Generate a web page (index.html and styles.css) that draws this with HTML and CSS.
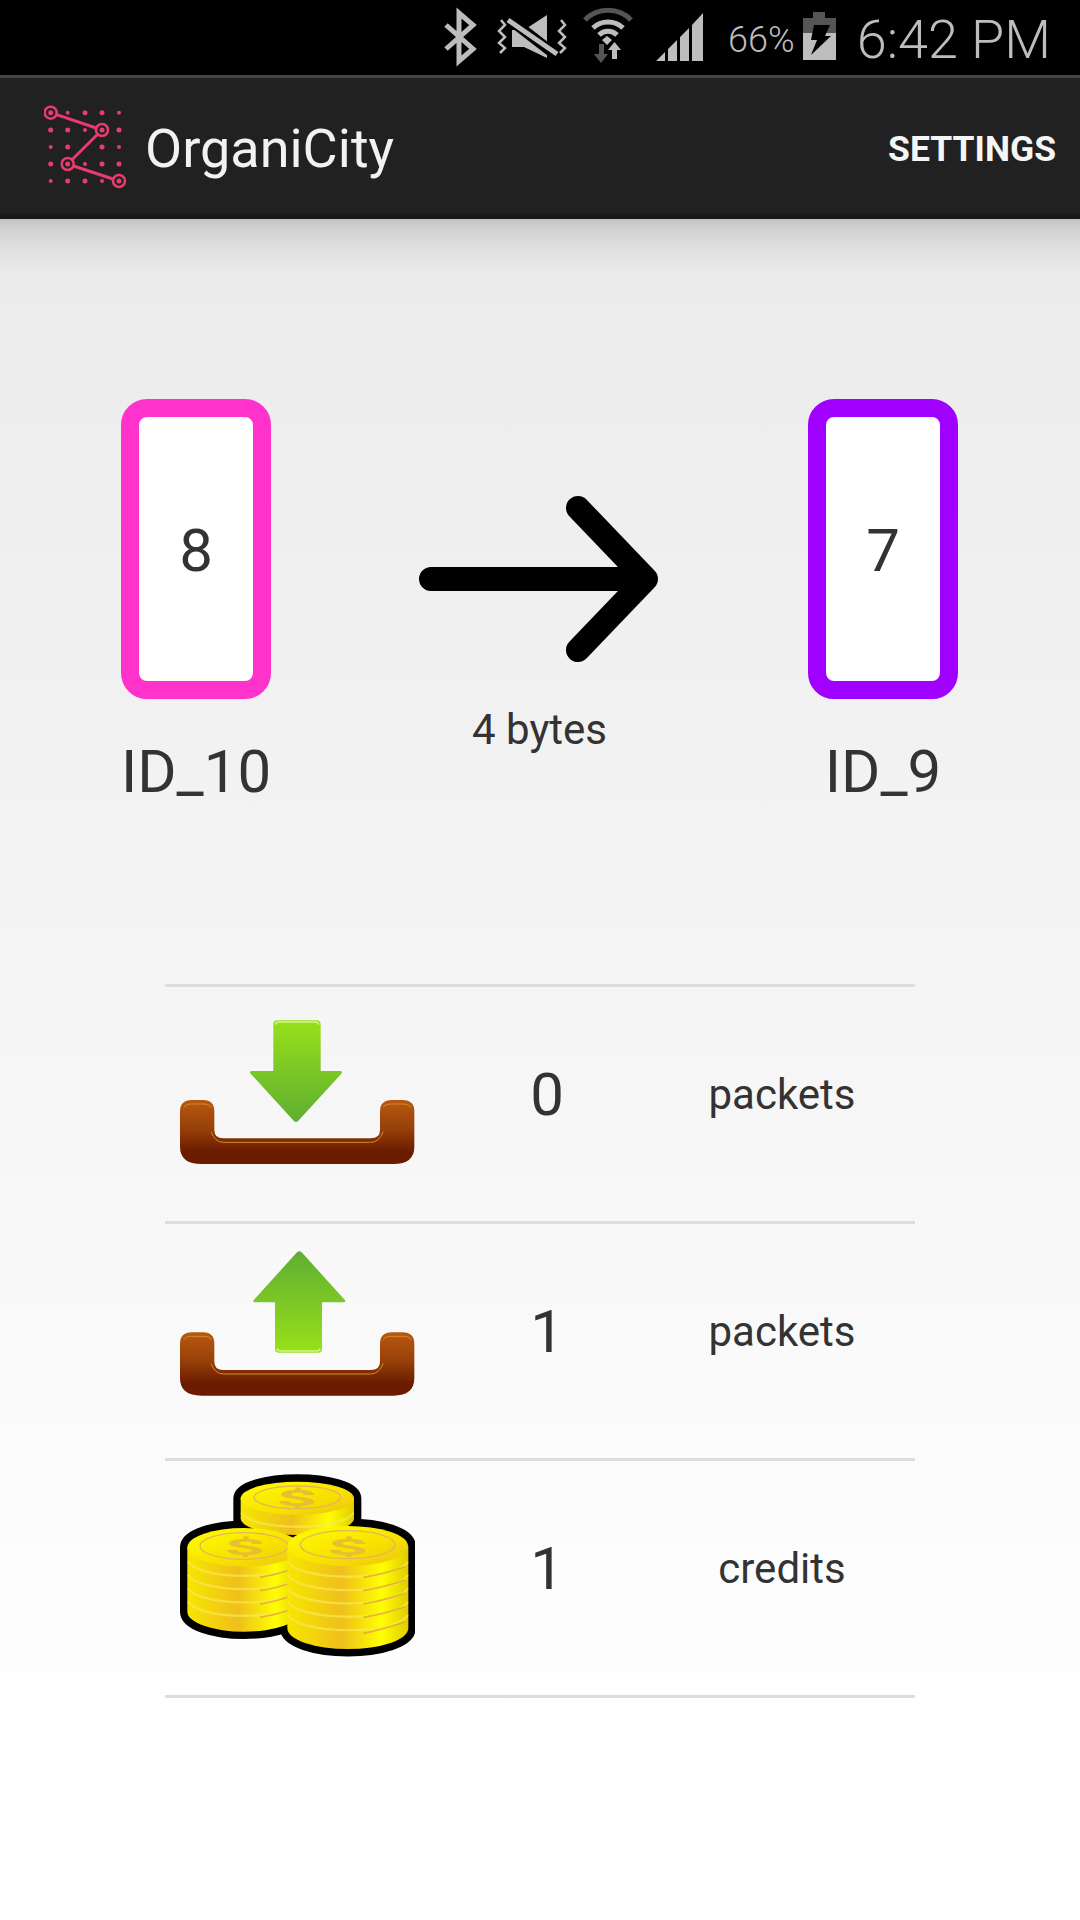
FILE: index.html
```html
<!DOCTYPE html>
<html lang="en">
<head>
  <meta charset="UTF-8" />
  <meta name="viewport" content="width=device-width, initial-scale=1" />
  <title>OrganiCity</title>
  <link rel="stylesheet" href="styles.css">
</head>
<body>
  <svg class="defs" width="0" height="0">
    <defs>
      <linearGradient id="trayFill" x1="0" y1="0" x2="0" y2="1">
        <stop offset="0" stop-color="#b9590f" />
        <stop offset="0.45" stop-color="#97400a" />
        <stop offset="0.8" stop-color="#6c1c00" />
        <stop offset="1" stop-color="#6a1b00" />
      </linearGradient>
      <linearGradient id="arrowDown" x1="0" y1="0" x2="0" y2="1">
        <stop offset="0" stop-color="#98e01a" />
        <stop offset="1" stop-color="#5fae32" />
      </linearGradient>
      <linearGradient id="arrowUp" x1="0" y1="1" x2="0" y2="0">
        <stop offset="0" stop-color="#98e01a" />
        <stop offset="1" stop-color="#5fae32" />
      </linearGradient>
      <linearGradient id="coinSide" x1="0" y1="0" x2="1" y2="0">
        <stop offset="0" stop-color="#f7e600" />
        <stop offset="0.45" stop-color="#efbf1c" />
        <stop offset="0.78" stop-color="#ffff00" />
        <stop offset="1" stop-color="#e2cb00" />
      </linearGradient>
      <linearGradient id="coinTop" x1="0" y1="0" x2="1" y2="1">
        <stop offset="0" stop-color="#ffff00" />
        <stop offset="0.6" stop-color="#f8e000" />
        <stop offset="1" stop-color="#ecc414" />
      </linearGradient>
    </defs>
  </svg>

  <div class="status-bar">
    <!-- bluetooth -->
    <svg class="status-icon bluetooth" viewBox="0 0 34 75"><path d="M3 25 L30 49 L16 61 V13 L30 25 L3 49" /></svg>
    <!-- mute + vibrate -->
    <svg class="status-icon vibrate" viewBox="0 0 70 75">
      <path class="solid" d="M15 30 H27 L50 15 V58 L27 47 H15 Z" />
      <path class="gap" d="M11 18 L60 56" />
      <path class="line" d="M11 20 L60 54" />
      <path class="thin" d="M4 20 L8 25 L2 31 L8 37 L2 43 L8 48 L3 53" />
      <path class="thin" d="M64 20 L68 25 L62 31 L68 37 L62 43 L68 48 L63 53" />
    </svg>
    <!-- wifi -->
    <svg class="status-icon wifi" viewBox="0 0 50 75">
      <path class="arc dim" d="M2 20 C14 7 36 7 48 20" />
      <path class="arc" d="M10 28 C18 20 32 20 40 28" />
      <path class="arc" d="M16 35 C21 30 29 30 34 35" />
      <path class="solid" d="M19 40 L24 36 L29 40 L24 45 Z" />
      <path class="solid dim" d="M16 44 H21 V54 H25 L18 63 L11 54 H16 Z" />
      <path class="solid" d="M29 59 H34 V50 H38 L31.500 42 L25 50 H29 Z" />
    </svg>
    <!-- signal -->
    <svg class="status-icon signal" viewBox="0 0 50 75">
      <path class="solid" d="M1 61 L10 52 V61 Z M13 49 L22 40 V61 H13 Z M25 37 L34 28 V61 H25 Z M37 25 L48 13 V61 H37 Z" />
    </svg>
    <span class="status-pct">66%</span>
    <!-- battery charging -->
    <svg class="status-icon battery" viewBox="0 0 36 75">
      <path class="solid dim" d="M11 12 H23 V18 H34 V33 H1 V18 H11 Z" />
      <path class="solid" d="M1 33 H34 V60 H1 Z" />
      <path class="bolt" d="M12 25 H28 L23 36 H29 L9 55 L15 40 H9 Z" />
    </svg>
    <span class="status-time">6:42 PM</span>
  </div>

  <header class="app-bar">
    <svg class="logo" viewBox="0 0 90 90" width="90" height="90">
      <g class="logo-dots">
        <circle cx="23.700" cy="13.700" r="2" /><circle cx="41" cy="13.700" r="2.500" /><circle cx="58" cy="13.700" r="2.500" /><circle cx="75" cy="13.700" r="2" />
        <circle cx="6.700" cy="31" r="2.500" /><circle cx="23.700" cy="31" r="2.500" /><circle cx="41" cy="31" r="2" /><circle cx="75" cy="31" r="2.500" />
        <circle cx="6.700" cy="48" r="2" /><circle cx="23.700" cy="48" r="2.500" /><circle cx="58" cy="48" r="2.500" /><circle cx="75" cy="48" r="2" />
        <circle cx="6.700" cy="65" r="2.500" /><circle cx="41" cy="65" r="2" /><circle cx="58" cy="65" r="2.500" /><circle cx="75" cy="65" r="2.500" />
        <circle cx="6.700" cy="82" r="2" /><circle cx="23.700" cy="82" r="2.500" /><circle cx="41" cy="82" r="2.500" /><circle cx="58" cy="82" r="2" />
      </g>
      <path class="logo-line" d="M6.700 13.700 L58 31 L23.700 65 L75 82" />
      <g class="logo-nodes">
        <circle cx="6.700" cy="13.700" r="6" /><circle cx="58" cy="31" r="6" /><circle cx="23.700" cy="65" r="6" /><circle cx="75" cy="82" r="6" />
      </g>
      <g class="logo-dots">
        <circle cx="6.700" cy="13.700" r="2.500" /><circle cx="58" cy="31" r="2.500" /><circle cx="23.700" cy="65" r="2.500" /><circle cx="75" cy="82" r="2.500" />
      </g>
    </svg>
    <h1 class="app-title">OrganiCity</h1>
    <span class="app-action">SETTINGS</span>
  </header>

  <main class="content">
    <section class="transfer">
      <div class="node">
        <div class="node-box pink">8</div>
        <div class="node-name">ID_10</div>
      </div>
      <div class="link">
        <svg class="link-arrow" viewBox="0 0 242 190" width="242" height="190">
          <path d="M12 95 H226 M159 24 L227 95 L159 166" />
        </svg>
        <div class="link-label">4 bytes</div>
      </div>
      <div class="node">
        <div class="node-box purple">7</div>
        <div class="node-name">ID_9</div>
      </div>
    </section>

    <section class="stats">
      <div class="stat-row">
        <svg class="stat-icon" viewBox="15 -9 750 702">
          <path fill="url(#trayFill)" d="M95 330 H130 Q163 330 163 365 V420 Q163 445 190 445 H632 Q660 445 660 420 V365 Q660 330 695 330 H728 Q763 330 763 365 V470 Q763 522 700 522 H125 Q60 522 60 470 V365 Q60 330 95 330 Z" />
          <path class="tray-shine" d="M72 352 Q76 342 95 342 H130 Q150 342 153 352 M153 425 Q165 457 190 457 H632 Q657 457 670 425 M670 352 Q675 342 695 342 H728 Q748 342 752 352" />
          <path fill="url(#arrowDown)" d="M352 91 H470 Q482 91 482 103 V243 H540 Q550 243 544 251 L415 392 Q408 399 401 392 L272 251 Q266 243 276 243 H340 V103 Q340 91 352 91 Z" />
          <path class="arrow-shine" d="M346 104 Q348 96 356 96 H466 Q474 96 476 104" />
        </svg>
        <span class="stat-value">0</span>
        <span class="stat-unit">packets</span>
      </div>
      <div class="stat-row">
        <svg class="stat-icon" viewBox="15 -3 750 702">
          <path fill="url(#trayFill)" d="M95 322 H130 Q163 322 163 357 V410 Q163 435 190 435 H632 Q660 435 660 410 V357 Q660 322 695 322 H728 Q763 322 763 357 V460 Q763 512 700 512 H125 Q60 512 60 460 V357 Q60 322 95 322 Z" />
          <path class="tray-shine" d="M72 344 Q76 334 95 334 H130 Q150 334 153 344 M153 415 Q165 447 190 447 H632 Q657 447 670 415 M670 344 Q675 334 695 334 H728 Q748 334 752 344" />
          <path fill="url(#arrowUp)" d="M411 82 Q418 75 425 82 L554 224 Q560 232 550 232 H486 V371 Q486 383 474 383 H357 Q345 383 345 371 V232 H286 Q276 232 282 224 Z" />
          <path class="arrow-shine" d="M351 370 Q353 378 361 378 H470 Q478 378 480 370" />
        </svg>
        <span class="stat-value">1</span>
        <span class="stat-unit">packets</span>
      </div>
      <div class="stat-row">
        <svg class="stat-icon" viewBox="15 3 750 702">
          <!-- black outline behind the three stacks -->
          <g class="coin-outline">
            <path d="M242 115 A170 50 0 0 1 582 115 V240 H242 Z" />
            <path d="M82 262 A170 58 0 0 1 422 262 V455 A170 60 0 0 1 82 455 Z" />
            <path d="M382 258 A181 60 0 0 1 745 258 V505 A181 62 0 0 1 382 505 Z" />
          </g>
          <!-- back stack -->
          <path fill="url(#coinSide)" d="M242 115 H582 V175 A170 50 0 0 1 242 175 Z" />
          <path class="coin-band" d="M244 158 A170 50 0 0 0 580 158" />
          <ellipse fill="url(#coinTop)" cx="412" cy="115" rx="170" ry="50" />
          <ellipse class="coin-ring" cx="412" cy="112" rx="130" ry="34" />
          <text class="coin-sign" transform="translate(410 138) scale(3 .9)" text-anchor="middle">$</text>
          <!-- left stack -->
          <path fill="url(#coinSide)" d="M82 262 H422 V455 A170 60 0 0 1 82 455 Z" />
          <path class="coin-band" d="M84 305 A170 50 0 0 0 420 305 M84 345 A170 50 0 0 0 420 345 M84 385 A170 50 0 0 0 420 385 M84 425 A170 50 0 0 0 420 425" />
          <path class="coin-shade" d="M300 352 Q350 345 400 325 M300 392 Q350 385 400 365 M300 432 Q350 425 400 405 M300 472 Q350 465 400 445" />
          <ellipse fill="url(#coinTop)" cx="252" cy="262" rx="170" ry="58" />
          <ellipse class="coin-ring" cx="252" cy="258" rx="132" ry="40" />
          <text class="coin-sign" transform="translate(254 286) scale(3 .9)" text-anchor="middle">$</text>
          <!-- front stack -->
          <path fill="url(#coinSide)" d="M382 258 H745 V505 A181 62 0 0 1 382 505 Z" />
          <path class="coin-band" d="M384 305 A181 52 0 0 0 743 305 M384 345 A181 52 0 0 0 743 345 M384 385 A181 52 0 0 0 743 385 M384 425 A181 52 0 0 0 743 425 M384 465 A181 52 0 0 0 743 465" />
          <path class="coin-shade" d="M610 352 Q680 340 735 320 M610 392 Q680 380 735 360 M610 432 Q680 420 735 400 M610 472 Q680 460 735 440 M610 520 Q680 505 735 485" />
          <ellipse fill="url(#coinTop)" cx="563" cy="258" rx="181" ry="60" />
          <ellipse class="coin-ring" cx="563" cy="254" rx="142" ry="42" />
          <text class="coin-sign" transform="translate(563 284) scale(3 .9)" text-anchor="middle">$</text>
        </svg>
        <span class="stat-value">1</span>
        <span class="stat-unit">credits</span>
      </div>
    </section>
  </main>
</body>
</html>
```

FILE: styles.css
```css
html,
body {
  margin: 0;
  height: 1920px;
  overflow: hidden;
}

body {
  display: flex;
  flex-direction: column;
  font-family: Roboto, 'Noto Sans', sans-serif;
  color: #333;
  background: #000;
}

.defs {
  position: absolute;
}

/* status bar */
.status-bar {
  height: 75px;
  display: flex;
  align-items: center;
  justify-content: flex-end;
  padding-right: 29px;
  color: #bdbdbd;
  background: #000;
}

.status-icon {
  height: 75px;
  flex: none;
}

.status-icon .solid {
  fill: #bdbdbd;
}

.status-icon .dim {
  fill: #555;
  stroke: #555;
}

.bluetooth {
  width: 34px;
  margin-right: 20px;
}

.bluetooth path {
  fill: none;
  stroke: #bdbdbd;
  stroke-width: 5;
}

.vibrate {
  width: 70px;
  margin-right: 16px;
}

.vibrate .gap {
  stroke: #000;
  stroke-width: 11;
}

.vibrate .line {
  stroke: #bdbdbd;
  stroke-width: 5;
}

.vibrate .thin {
  fill: none;
  stroke: #bdbdbd;
  stroke-width: 2.500;
}

.wifi {
  width: 50px;
  margin-right: 22px;
}

.wifi .arc {
  fill: none;
  stroke: #bdbdbd;
  stroke-width: 5;
}

.wifi .arc.dim {
  fill: none;
  stroke: #555;
}

.wifi .solid.dim {
  stroke: none;
}

.signal {
  width: 50px;
  margin-right: 23px;
}

.status-pct {
  padding-top: 4px;
  font-size: 36px;
  font-weight: 300;
  margin-right: 7px;
  white-space: nowrap;
}

.battery {
  width: 36px;
  margin-right: 19px;
}

.battery .dim {
  stroke: none;
}

.battery .bolt {
  fill: #000;
}

.status-time {
  padding-top: 4px;
  font-size: 54px;
  font-weight: 300;
  white-space: nowrap;
}

/* app bar */
.app-bar {
  height: 129px;
  display: flex;
  align-items: center;
  padding: 6px 24px 0 44px;
  background: #212121;
  border-top: 3px solid #444;
  border-bottom: 6px solid #1a1a1a;
}

.logo {
  flex: none;
  margin-right: 11px;
  margin-bottom: 9px;
}

.logo-dots {
  fill: #e83b70;
}

.logo-line {
  fill: none;
  stroke: #e83b70;
  stroke-width: 3;
}

.logo-nodes {
  fill: #212121;
  stroke: #e83b70;
  stroke-width: 2.500;
}

.app-title {
  margin: 0;
  flex: 1;
  font-size: 54px;
  font-weight: 400;
  color: #f2f2f2;
}

.app-action {
  font-size: 35.500px;
  font-weight: 700;
  color: #f5f5f5;
}

/* main, the first gradient is the shadow under the app bar */
.content {
  flex: 1;
  background:
    linear-gradient(rgba(0, 0, 0, 0.18), rgba(0, 0, 0, 0.13) 6px, rgba(0, 0, 0, 0.05) 28px, rgba(0, 0, 0, 0) 58px),
    linear-gradient(#ebebeb, #f6f6f6 50%, #fff 90%);
}

.transfer {
  display: flex;
  justify-content: space-between;
  padding: 180px 122px 0 121px;
}

.node {
  width: 150px;
  display: flex;
  flex-direction: column;
  align-items: center;
}

.node-box {
  box-sizing: border-box;
  width: 150px;
  height: 300px;
  display: flex;
  align-items: center;
  justify-content: center;
  padding-top: 2px;
  font-size: 60px;
  background: #fff;
  border: 18px solid;
  border-radius: 26px;
}

.pink {
  border-color: #ff33cc;
}

.purple {
  border-color: #a000ff;
}

.node-name {
  margin-top: 33px;
  font-size: 60px;
  font-weight: 400;
  line-height: 80px;
  white-space: nowrap;
}

.link {
  display: flex;
  flex-direction: column;
  align-items: center;
  padding-top: 85px;
}

.link-arrow path {
  fill: none;
  stroke: #000;
  stroke-width: 24;
  stroke-linecap: round;
  stroke-linejoin: round;
}

.link-label {
  margin-top: 28px;
  font-size: 42px;
  line-height: 56px;
}

.stats {
  width: 750px;
  margin: 172px auto 0;
  border-top: 3px solid #ddd;
}

.stat-row {
  height: 234px;
  display: grid;
  grid-template-columns: 250px 264px 206px;
  align-items: center;
  border-bottom: 3px solid #ddd;
}

.stat-icon {
  width: 250px;
  height: 234px;
}

.tray-shine {
  fill: none;
  stroke: #d58a2c;
  stroke-width: 3;
}

.arrow-shine {
  fill: none;
  stroke: #d4f58a;
  stroke-width: 4;
}

.coin-outline path {
  fill: #000;
  stroke: #000;
  stroke-width: 44;
  stroke-linejoin: round;
}

.coin-band {
  fill: none;
  stroke: #f8e850;
  stroke-opacity: 0.7;
  stroke-width: 7;
}

.coin-shade {
  fill: none;
  stroke: #dc9c30;
  stroke-opacity: 0.7;
  stroke-width: 5;
}

.coin-ring {
  fill: none;
  stroke: #e0b858;
  stroke-width: 4;
}

.coin-sign {
  font-size: 72px;
  font-weight: 700;
  fill: #e6c030;
}

.stat-value {
  padding-bottom: 20px;
  text-align: center;
  font-size: 60px;
}

.stat-unit {
  padding-bottom: 20px;
  text-align: center;
  font-size: 42px;
}
```
